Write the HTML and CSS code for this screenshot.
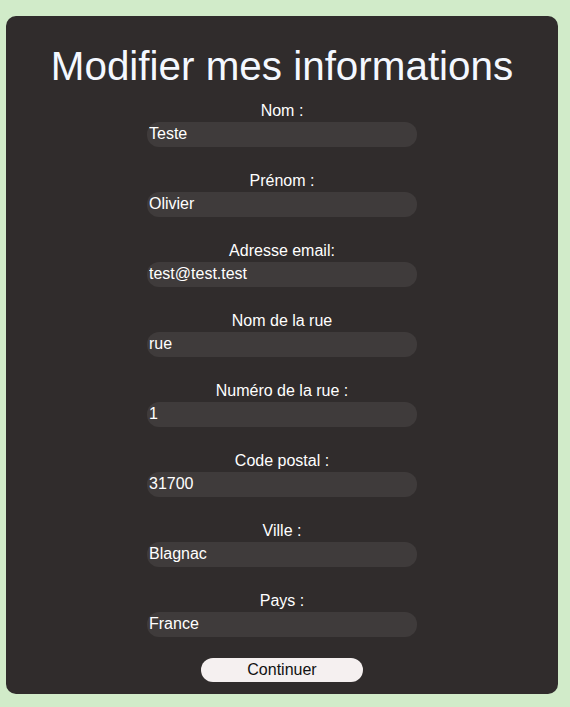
FILE: index.html
```html
<!DOCTYPE html>
<html lang="fr">
<head>
<meta charset="utf-8">
<title>Modifier mes informations</title>
<link rel="stylesheet" href="styles.css">
</head>
<body>
<main class="card">
  <h1 class="title">Modifier mes informations</h1>
  <form class="form">
    <div class="field"><label class="label" for="nom">Nom :</label><input class="input" id="nom" value="Teste"></div>
    <div class="field"><label class="label" for="prenom">Prénom :</label><input class="input" id="prenom" value="Olivier"></div>
    <div class="field"><label class="label" for="email">Adresse email:</label><input class="input" id="email" value="test@test.test"></div>
    <div class="field"><label class="label" for="rue">Nom de la rue</label><input class="input" id="rue" value="rue"></div>
    <div class="field"><label class="label" for="num">Numéro de la rue :</label><input class="input" id="num" value="1"></div>
    <div class="field"><label class="label" for="cp">Code postal :</label><input class="input" id="cp" value="31700"></div>
    <div class="field"><label class="label" for="ville">Ville :</label><input class="input" id="ville" value="Blagnac"></div>
    <div class="field"><label class="label" for="pays">Pays :</label><input class="input" id="pays" value="France"></div>
    <button class="button" type="button">Continuer</button>
  </form>
</main>
</body>
</html>
```

FILE: styles.css
```css
html, body {
  margin: 0;
  padding: 0;
  background: #d1ebc9;
  font-family: "Liberation Sans", Arial, sans-serif;
}

body {
  padding: 16px 12px 0 6px;
}

.card {
  box-sizing: border-box;
  width: 552px;
  height: 678px;
  background: #302c2c;
  border-radius: 10px;
  padding-top: 27px;
  display: flex;
  flex-direction: column;
  align-items: center;
  color: #ffffff;
}

.title {
  margin: 0;
  font-size: 40.4px;
  font-weight: normal;
  line-height: 46px;
  color: #f4f8ff;
}

.form {
  margin-top: 12px;
  display: flex;
  flex-direction: column;
  align-items: center;
  gap: 24px;
}

.field {
  display: flex;
  flex-direction: column;
  align-items: center;
  gap: 2px;
}

.label {
  font-size: 16px;
  line-height: 18px;
  padding-top: 1px;
}

.input {
  box-sizing: border-box;
  width: 270px;
  height: 25px;
  border: none;
  border-radius: 12px;
  background: #3f3b3b;
  color: #ffffff;
  font-family: "Liberation Sans", Arial, sans-serif;
  font-size: 16px;
  padding: 0 2px 2px;
  margin: 0;
  outline: none;
}

.button {
  margin-top: -3px;
  width: 162px;
  height: 24px;
  border: none;
  border-radius: 12px;
  background: #f5f0f0;
  color: #111111;
  font-family: "Liberation Sans", Arial, sans-serif;
  font-size: 16px;
  padding: 0;
}
```
